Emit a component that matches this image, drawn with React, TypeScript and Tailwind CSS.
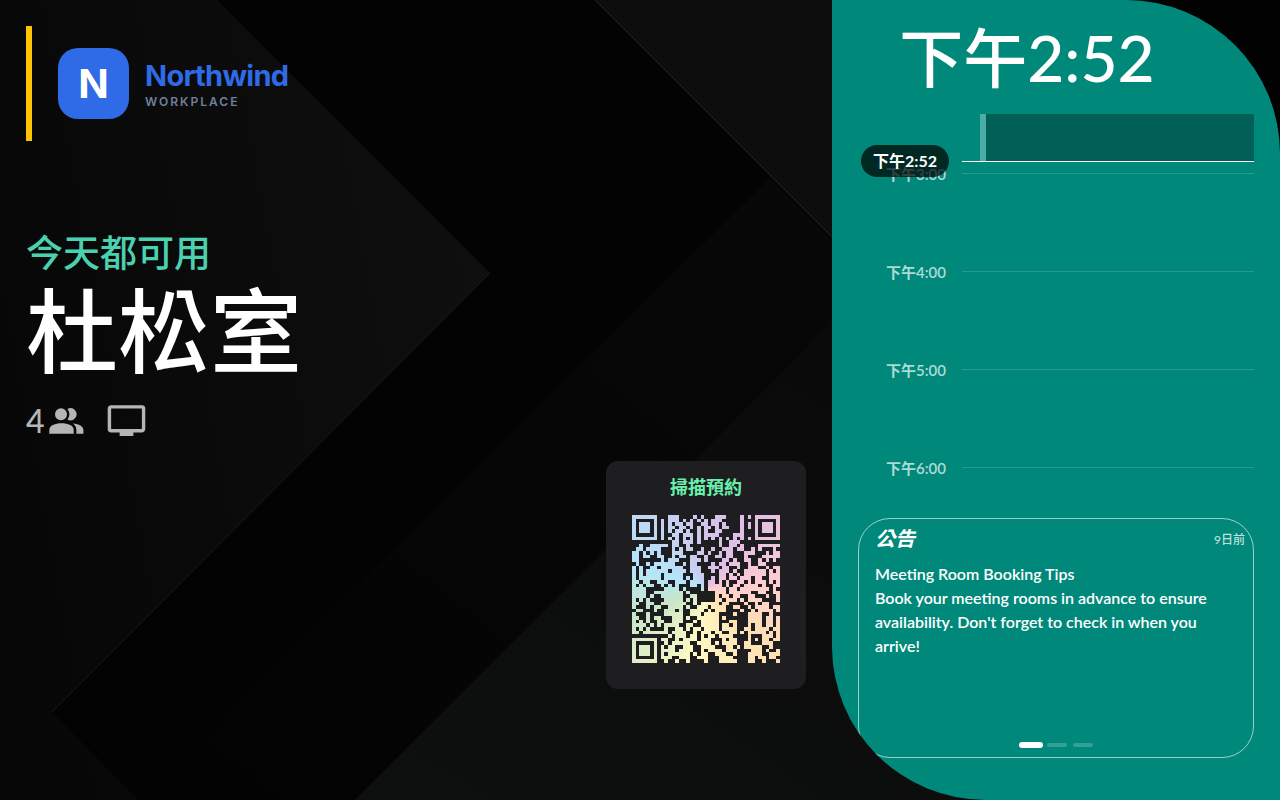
import { MdPersonalVideo } from "react-icons/md";

const HOURS = ["下午3:00", "下午4:00", "下午5:00", "下午6:00"];

const QR_SIZE = 41;

const QR_ROWS = [
  "..........###....#.#...###....#.#........",
  "........#.###.#.#.#.#.###.....#..........",
  "........#.#.##.##..##.##.#....#.#........",
  "........#.##.##.#.#.##.#.##...#.#........",
  "........#.#.##.#..#.#..##.....#..........",
  "........#..##.###.#.####....###..........",
  "........#.#.#.#.#.#.#.#.#.#.#.#.#........",
  "...........##.###.#.....#..###...........",
  "..#..#####.##..#........#..##.#....######",
  ".##.####...#.#.##..#..#..###.##..#.#...#.",
  "##.#.#.#...###....##.#..#.##...###...#.##",
  "##.##..##..#.##.##..#..##.##...#....#####",
  "##......#.###...###.#....##.#..##..#.#.#.",
  ".#..#.######..#.##....#.##.###..#..##....",
  "#.#..##.######..###..###.##..#..###..#.##",
  "#.#.######.####.###...#.###.#..######.#.#",
  "#.#.####.#####...###....##.#.#.######.###",
  "#.######.#####.#.###..#.##.##.###.##..###",
  "##.##..###..###.####.##.#.#..##.#.###.#.#",
  "#.#.##..#.#.#...##.#.####.#.##.####.#..##",
  "####.....####.#....#.#####.##.########.#.",
  "####..########.#.......###.######..##..##",
  "####.#..######..##.....#.##.##..##...#..#",
  "#.#.#....#####.#.#.....##.###.#.####....#",
  "##..##..#######..#.#####.##....#..#.##...",
  "#...#.##..####.#..###.####..##..#.####.##",
  ".##...#..###.#..####.#.###....#..#.####.#",
  "#...#....#####..###.####....#...####..#..",
  "##..#.##...###.#..######.#......####.##.#",
  "#.#.#..##..###...#.#####...##...####.##.#",
  "####.#.#.####..##..#####.##.#...#.##.##.#",
  "#.#.#....#..##.#.##.####.####..##.####.##",
  "##.#######.####..#.###.##..##.#.#####.#.#",
  "..........#.###.##.#.##.####....#...###.#",
  "........##..#.####.###...#.##...#.#.##.##",
  ".........#.#####..####.#.####..##...###..",
  "........#.##..###..####...##.#.#####..#..",
  "........####.####..#.####.###....###.#..#",
  "........#.######.#.##..###..#...####..###",
  "........###..###..###...####....##.##.##.",
  ".........#..#..#....#...#####...##..#...#",
];

const isFinder = (x: number, y: number) =>
  (x < 7 && y < 7) || (x > 33 && y < 7) || (x < 7 && y > 33);

// the dark modules are painted over the gradient, the light ones let it through
const darkModules = QR_ROWS.flatMap((row, y) =>
  row
    .split("")
    .map((cell, x) => (cell === "." && !isFinder(x, y) ? `M${x} ${y}h1v1h-1z` : ""))
).join("");

function QrCode() {
  return (
    <div className="size-[148px] bg-[conic-gradient(#d1c4e9,#e1bee7_35deg,#ffcdd2_85deg,#ffe0b2_135deg,#fff9c4_190deg,#c8e6c9_250deg,#b3e5fc_290deg,#d1c4e9)]">
      <svg
        viewBox={`0 0 ${QR_SIZE} ${QR_SIZE}`}
        className="size-full"
        shapeRendering="crispEdges"
        role="img"
        aria-label="QR"
      >
        <path d={darkModules} fill="#1e1e20" />
        {[
          [0, 0],
          [34, 0],
          [0, 34],
        ].map(([x, y]) => (
          <path
            key={`${x}-${y}`}
            transform={`translate(${x} ${y})`}
            d="M1 1h5v5h-5zM2 2v3h3v-3z"
            fill="#1e1e20"
            fillRule="evenodd"
          />
        ))}
      </svg>
    </div>
  );
}

function Backdrop() {
  return (
    <svg
      viewBox="0 0 1280 800"
      preserveAspectRatio="xMidYMid slice"
      className="absolute inset-0 size-full"
      aria-hidden="true"
    >
      <defs>
        <linearGradient id="leftPanel" x1="0" y1="0.6" x2="1" y2="0.3">
          <stop offset="0" stopColor="#070707" />
          <stop offset="1" stopColor="#0f0f0f" />
        </linearGradient>
        <linearGradient id="band" x1="0" y1="1" x2="1" y2="0">
          <stop offset="0" stopColor="#030303" />
          <stop offset="1" stopColor="#080808" />
        </linearGradient>
        <linearGradient id="corner" x1="0" y1="1" x2="1" y2="0">
          <stop offset="0" stopColor="#0e100f" />
          <stop offset="1" stopColor="#080808" />
        </linearGradient>
      </defs>
      <rect width="1280" height="800" fill="#030303" />
      <path d="M0 0H217L490 273L52 712L138 800H0Z" fill="url(#leftPanel)" />
      <path d="M490 273L52 712" stroke="#191919" strokeWidth="1" />
      <path d="M770 178L900 308L400 800H140Z" fill="url(#band)" />
      <path d="M595 0H1100V505Z" fill="#0d0d0d" />
      <path d="M595 0L900 305" stroke="#242424" strokeWidth="1" />
      <path d="M355 800L850 305V300H1100V800Z" fill="url(#corner)" />
      <rect x="1100" width="180" height="300" fill="#020202" />
    </svg>
  );
}

function PeopleIcon({ className }: { className?: string }) {
  return (
    <svg viewBox="0 0 35 26" className={className} fill="currentColor" aria-hidden="true">
      <circle cx="12" cy="6.2" r="6" />
      <path d="M18.4 1.1A6 6 0 1 1 18.4 11.4Q20.4 9.2 20.4 6.2Q20.4 3.3 18.4 1.1Z" />
      <path d="M.3 25.7V22C.3 17.5 6 15.3 12.5 15.3S24.7 17.5 24.7 22V25.7Z" />
      <path d="M24 15.6C30 16 34.4 18.5 34.4 22V25.7H27.4V22C27.4 19.5 26 17 24 15.6Z" />
    </svg>
  );
}

function Logo() {
  return (
    <div className="flex items-center border-l-[6px] border-[#ffc400] py-[22px] pl-[26px]">
      <div className="flex size-[71px] items-center justify-center rounded-[20px] bg-[#2f6be6] font-['Inter',sans-serif] text-[40px] font-bold text-white">
        N
      </div>
      <div className="ml-4 font-['Inter',sans-serif]">
        <div className="text-[29px] leading-9 font-bold tracking-tight text-[#2f6be6]">
          Northwind
        </div>
        <div className="text-xs leading-4 font-semibold tracking-[2px] text-[#71809b]">
          WORKPLACE
        </div>
      </div>
    </div>
  );
}

function Timeline() {
  return (
    <section className="relative h-[404px] pt-[10px]">
      {HOURS.map((hour) => (
        <div key={hour} className="flex h-[98px] items-center gap-4">
          <span className="w-[88px] pt-[2px] text-right text-[15px] font-semibold text-white/70">
            {hour}
          </span>
          <span className="h-px flex-1 bg-white/15" />
        </div>
      ))}
      <div className="absolute top-0 right-0 left-[122px] h-[47px] border-l-[6px] border-white/30 bg-black/30 bg-clip-padding" />
      <div className="absolute top-[31px] right-0 left-[3px] flex h-8 items-center gap-[13px]">
        <span className="flex h-8 w-[88px] items-center justify-center rounded-full bg-black/70 text-base font-bold text-white">
          下午2:52
        </span>
        <span className="h-px flex-1 bg-white" />
      </div>
    </section>
  );
}

function Announcement() {
  return (
    <section className="flex h-[240px] flex-col rounded-[32px] border border-white/60 pt-[3px] pb-[9px]">
      <header className="flex items-center justify-between pr-2 pl-4">
        <h2 className="text-xl leading-8 font-bold italic">公告</h2>
        <time className="pt-1 text-xs font-medium text-white/75">9日前</time>
      </header>
      <div className="px-4 pt-2 text-base leading-6 font-semibold">
        <p>Meeting Room Booking Tips</p>
        <p>
          Book your meeting rooms in advance to ensure availability. Don't forget to check in when
          you arrive!
        </p>
      </div>
      <div className="mt-auto flex items-center justify-center gap-1">
        <button type="button" aria-label="1" className="h-[6px] w-6 rounded-full bg-white" />
        <button type="button" aria-label="2" className="mr-[2px] h-1 w-5 rounded-full bg-white/20" />
        <button type="button" aria-label="3" className="h-1 w-5 rounded-full bg-white/20" />
      </div>
    </section>
  );
}

export default function App() {
  return (
    <div
      lang="zh-Hant"
      className="relative flex min-h-screen overflow-hidden bg-black font-['Lato','Noto_Sans_CJK_TC',sans-serif] text-white"
    >
      <Backdrop />

      <main className="relative flex flex-1 flex-col items-start p-[26px]">
        <Logo />
        <p className="mt-[89px] text-[37px] leading-[46px] font-medium text-[#4bd0b0]">今天都可用</p>
        <h1 className="text-[92px] leading-[110px] font-medium">杜松室</h1>
        <div className="mt-[14px] flex items-center text-[#b5b5b5]">
          <span className="text-[32px] leading-10 font-medium">4</span>
          <PeopleIcon className="ml-1 h-[26px] w-[35px]" />
          <MdPersonalVideo className="ml-[22px] size-[41px]" />
        </div>

        <div className="mt-auto mb-[85px] flex flex-col items-center self-end rounded-xl bg-[#1e1e20] px-[26px] pt-3 pb-[26px]">
          <h2 className="mb-[14px] text-lg leading-7 font-bold text-[#69f0ae]">掃描預約</h2>
          <QrCode />
        </div>
      </main>

      <aside className="relative flex w-[35%] flex-col overflow-hidden rounded-tr-[12vw] rounded-bl-[12vw] bg-[#00897b] px-[26px] pb-[42px]">
        <div className="flex h-[114px] items-center justify-center pt-[2px] pr-[58px] text-[64px] leading-none font-medium">
          下午2:52
        </div>
        <Timeline />
        <Announcement />
      </aside>
    </div>
  );
}
